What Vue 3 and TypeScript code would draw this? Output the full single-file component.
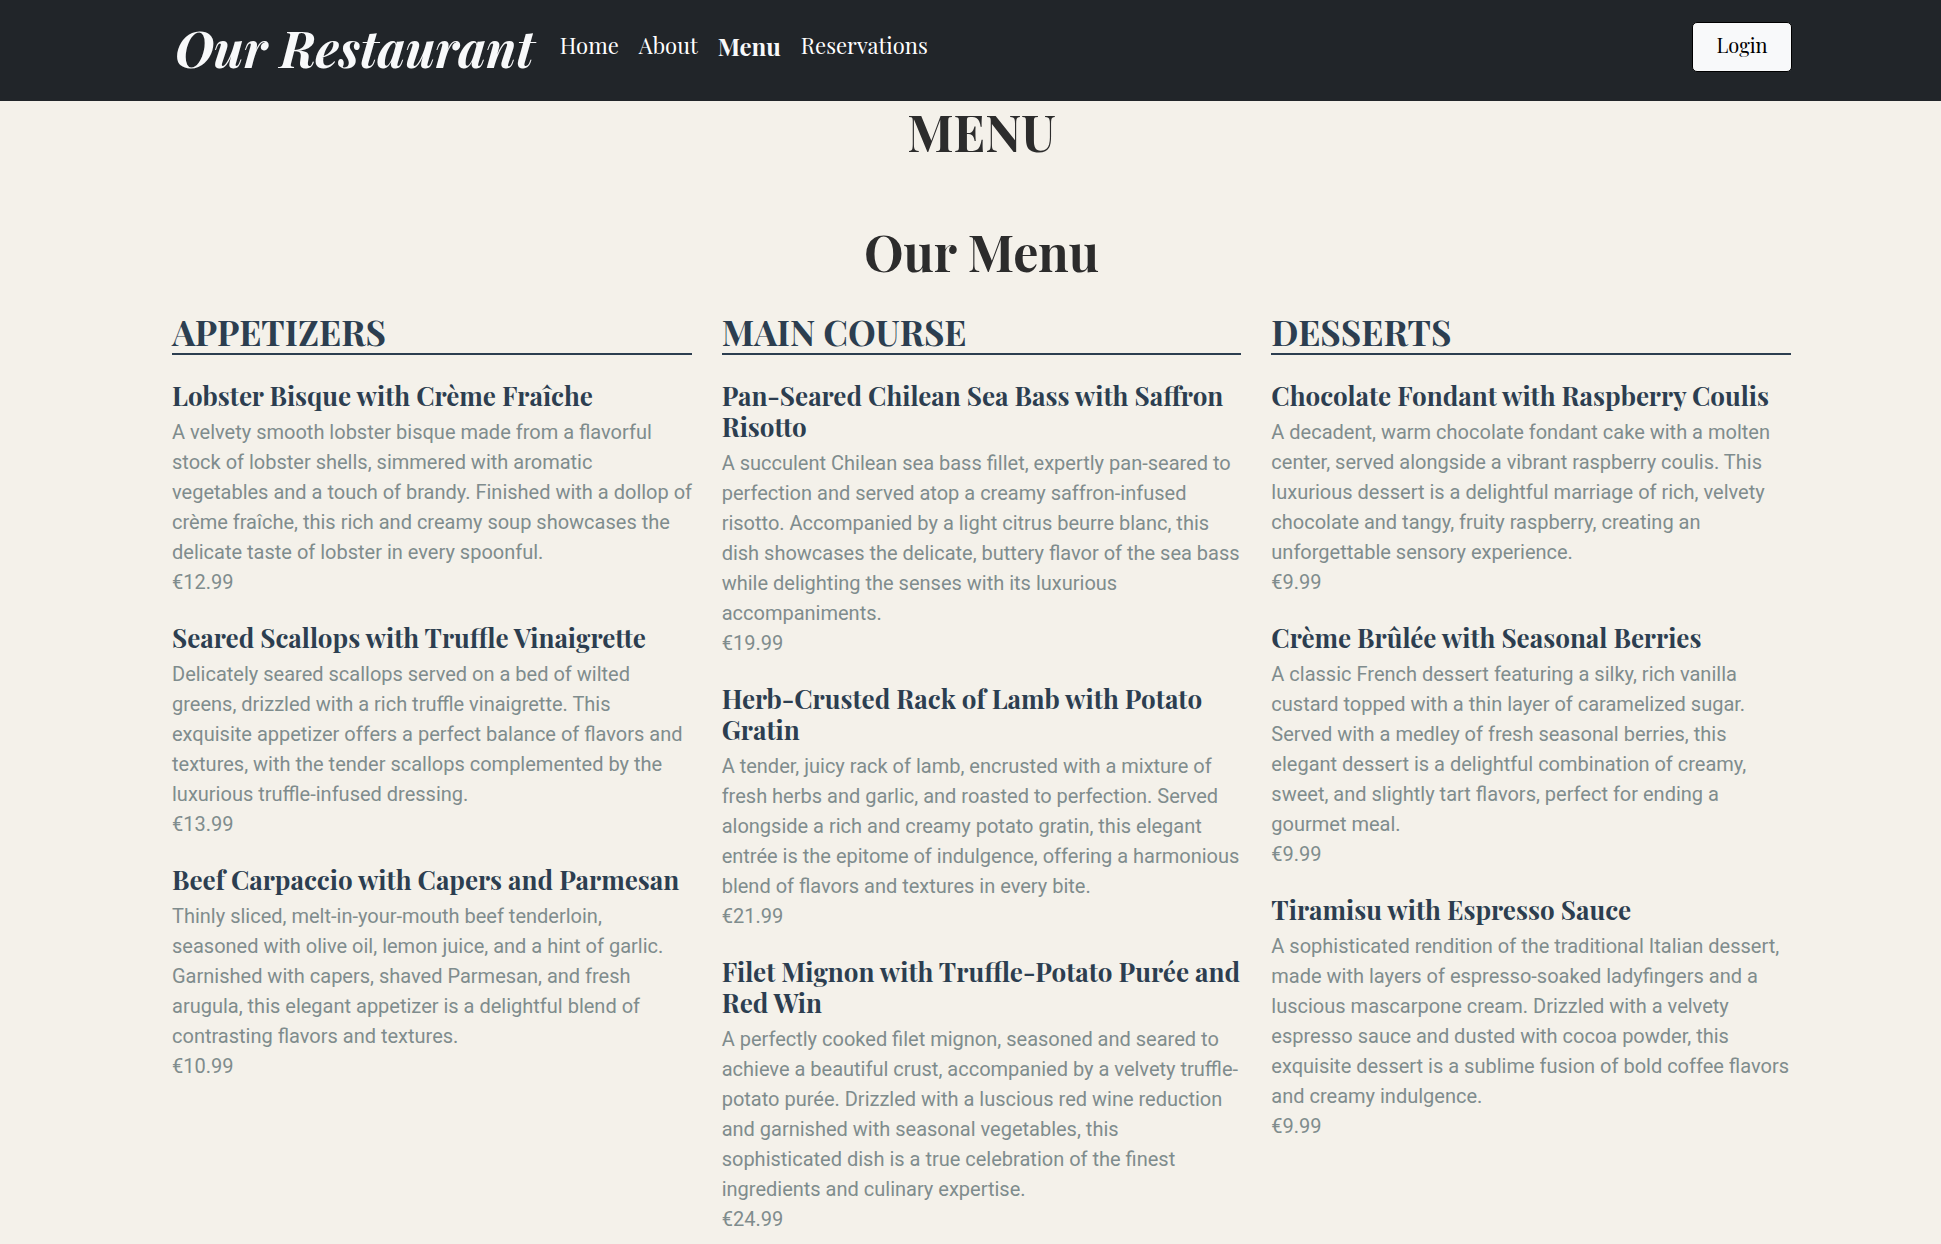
<script setup lang="ts">
interface Dish {
  name: string
  description: string
  price: string
}

interface Course {
  title: string
  dishes: Dish[]
}

const links: string[] = ['Home', 'About', 'Menu', 'Reservations']
const current = 'Menu'

const courses: Course[] = [
  {
    title: 'APPETIZERS',
    dishes: [
      {
        name: 'Lobster Bisque with Crème Fraîche',
        description:
          'A velvety smooth lobster bisque made from a flavorful stock of lobster shells, simmered with aromatic vegetables and a touch of brandy. Finished with a dollop of crème fraîche, this rich and creamy soup showcases the delicate taste of lobster in every spoonful.',
        price: '€12.99',
      },
      {
        name: 'Seared Scallops with Truffle Vinaigrette',
        description:
          'Delicately seared scallops served on a bed of wilted greens, drizzled with a rich truffle vinaigrette. This exquisite appetizer offers a perfect balance of flavors and textures, with the tender scallops complemented by the luxurious truffle-infused dressing.',
        price: '€13.99',
      },
      {
        name: 'Beef Carpaccio with Capers and Parmesan',
        description:
          'Thinly sliced, melt-in-your-mouth beef tenderloin, seasoned with olive oil, lemon juice, and a hint of garlic. Garnished with capers, shaved Parmesan, and fresh arugula, this elegant appetizer is a delightful blend of contrasting flavors and textures.',
        price: '€10.99',
      },
    ],
  },
  {
    title: 'MAIN COURSE',
    dishes: [
      {
        name: 'Pan-Seared Chilean Sea Bass with Saffron Risotto',
        description:
          'A succulent Chilean sea bass fillet, expertly pan-seared to perfection and served atop a creamy saffron-infused risotto. Accompanied by a light citrus beurre blanc, this dish showcases the delicate, buttery flavor of the sea bass while delighting the senses with its luxurious accompaniments.',
        price: '€19.99',
      },
      {
        name: 'Herb-Crusted Rack of Lamb with Potato Gratin',
        description:
          'A tender, juicy rack of lamb, encrusted with a mixture of fresh herbs and garlic, and roasted to perfection. Served alongside a rich and creamy potato gratin, this elegant entrée is the epitome of indulgence, offering a harmonious blend of flavors and textures in every bite.',
        price: '€21.99',
      },
      {
        name: 'Filet Mignon with Truffle-Potato Purée and Red Win',
        description:
          'A perfectly cooked filet mignon, seasoned and seared to achieve a beautiful crust, accompanied by a velvety truffle-potato purée. Drizzled with a luscious red wine reduction and garnished with seasonal vegetables, this sophisticated dish is a true celebration of the finest ingredients and culinary expertise.',
        price: '€24.99',
      },
    ],
  },
  {
    title: 'DESSERTS',
    dishes: [
      {
        name: 'Chocolate Fondant with Raspberry Coulis',
        description:
          'A decadent, warm chocolate fondant cake with a molten center, served alongside a vibrant raspberry coulis. This luxurious dessert is a delightful marriage of rich, velvety chocolate and tangy, fruity raspberry, creating an unforgettable sensory experience.',
        price: '€9.99',
      },
      {
        name: 'Crème Brûlée with Seasonal Berries',
        description:
          'A classic French dessert featuring a silky, rich vanilla custard topped with a thin layer of caramelized sugar. Served with a medley of fresh seasonal berries, this elegant dessert is a delightful combination of creamy, sweet, and slightly tart flavors, perfect for ending a gourmet meal.',
        price: '€9.99',
      },
      {
        name: 'Tiramisu with Espresso Sauce',
        description:
          'A sophisticated rendition of the traditional Italian dessert, made with layers of espresso-soaked ladyfingers and a luscious mascarpone cream. Drizzled with a velvety espresso sauce and dusted with cocoa powder, this exquisite dessert is a sublime fusion of bold coffee flavors and creamy indulgence.',
        price: '€9.99',
      },
    ],
  },
]
</script>

<template>
  <div class="page">
    <header class="topbar">
      <a class="brand" href="#">Our Restaurant</a>
      <nav class="links" aria-label="Main">
        <a
          v-for="link in links"
          :key="link"
          class="link"
          :class="{ active: link === current }"
          :aria-current="link === current ? 'page' : undefined"
          href="#"
          >{{ link }}</a
        >
      </nav>
      <button class="login" type="button">Login</button>
    </header>

    <main class="content">
      <h1 class="page-title">MENU</h1>
      <h2 class="menu-title">Our Menu</h2>
      <div class="courses">
        <section v-for="course in courses" :key="course.title" class="course">
          <h3 class="course-title">{{ course.title }}</h3>
          <article v-for="dish in course.dishes" :key="dish.name" class="dish">
            <h4 class="dish-name">{{ dish.name }}</h4>
            <p class="dish-text">{{ dish.description }}</p>
            <p class="dish-text">{{ dish.price }}</p>
          </article>
        </section>
      </div>
    </main>
  </div>
</template>

<style>
body {
  margin: 0;
  background: #f4f1ea;
}
</style>

<style scoped>
.page {
  --serif: "Playfair Display", "Liberation Serif", serif;
  font-family: Roboto, sans-serif;
  background: #f4f1ea;
}

.topbar {
  display: flex;
  align-items: flex-start;
  padding: 22px 149px 27px 172px;
  background: #212529;
  font-family: var(--serif);
}

.brand {
  margin-right: 14px;
  padding: 0 2px 0 3px;
  color: #f8f9fa;
  font-size: 50px;
  font-style: italic;
  font-weight: 700;
  line-height: 52px;
  text-decoration: none;
  white-space: nowrap;
}

.links {
  display: flex;
  flex: 1;
  align-items: flex-start;
}

.link {
  padding: 6px 10px;
  color: #fff;
  font-size: 22px;
  line-height: 35px;
  text-decoration: none;
}

.link.active {
  color: #f8f9fa;
  font-size: 24px;
  font-weight: 700;
  line-height: 36px;
}

.login {
  width: 100px;
  height: 50px;
  padding: 0 0 4px;
  border: 1px solid #000;
  border-radius: 5px;
  background: #f8f9fa;
  color: #000;
  font-family: inherit;
  font-size: 20px;
  line-height: 30px;
}

.content {
  padding: 0 150px 24px 172px;
}

.page-title,
.menu-title,
.course-title,
.dish-name {
  margin: 0;
  font-family: var(--serif);
  font-weight: 700;
}

.page-title,
.menu-title {
  color: #2c2c2c;
  font-size: 50px;
  line-height: 61px;
  text-align: center;
}

.menu-title {
  margin-top: 59px;
}

.courses {
  display: grid;
  grid-template-columns: repeat(3, 1fr);
  gap: 30px;
  margin-top: 29px;
}

.course-title {
  margin-bottom: 25px;
  border-bottom: 2px solid #2c3e50;
  color: #2c3e50;
  font-size: 35px;
  line-height: 42px;
}

.dish {
  margin-bottom: 25px;
}

.dish-name {
  margin-bottom: 6px;
  color: #2c3e50;
  font-size: 26px;
  line-height: 31px;
}

/* Long lines may hang slightly past the course rule. */
.dish-text {
  margin: 0 -1px 0 0;
  color: #7f8c8d;
  font-size: 20px;
  line-height: 30px;
}
</style>
